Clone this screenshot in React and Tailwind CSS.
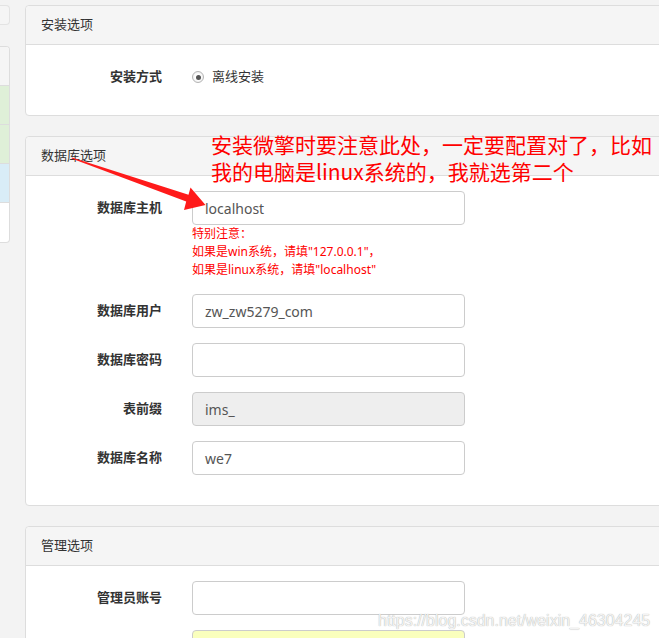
import React from "react";

function Panel({ title, children, bodyClass }) {
  return (
    <div className="rounded-[4px] border border-[#dddddd] bg-white">
      <div className="flex h-[39px] items-center rounded-t-[4px] border-b border-[#dddddd] bg-[#f5f5f5] px-[15px] text-[13px] text-[#333]">
        {title}
      </div>
      <div className={bodyClass}>{children}</div>
    </div>
  );
}

function Row({ label, value, gray, yellow, children }) {
  return (
    <div className="flex items-start">
      <div className="flex h-[34px] w-[136px] shrink-0 items-center justify-end text-[13px] font-bold text-[#333]">
        {label}
      </div>
      <div className="ml-[30px] w-[273px]">
        <div
          className={
            "flex h-[34px] items-center rounded-[4px] border border-[#cccccc] px-[12px] text-[14px] text-[#555] font-['Noto_Sans','Noto_Sans_CJK_SC',sans-serif] " +
            (gray ? "bg-[#eeeeee]" : yellow ? "bg-[#faffbd]" : "bg-white")
          }
        >
          {value}
        </div>
        {children}
      </div>
    </div>
  );
}

export default function App() {
  return (
    <div className="relative h-[638px] w-[659px] overflow-hidden bg-[#f3f3f3] font-['Noto_Sans','Noto_Sans_CJK_SC',sans-serif] text-[13px] text-[#333]">
      <div className="flex">
        <aside className="flex w-[10px] shrink-0 flex-col gap-[21px] pt-[5px]">
          <div className="h-[20px] rounded-r-[4px] border border-l-0 border-[#e3e3e3] bg-[#f5f5f5]" />
          <div className="h-[197px] overflow-hidden rounded-r-[4px] border border-l-0 border-[#dddddd] bg-white">
            <div className="h-[39px] border-b border-[#dddddd] bg-[#f5f5f5]" />
            <div className="h-[39px] border-b border-[#dddddd] bg-[#dff0d8]" />
            <div className="h-[39px] border-b border-[#dddddd] bg-[#dff0d8]" />
            <div className="h-[39px] border-b border-[#dddddd] bg-[#d9edf7]" />
          </div>
        </aside>

        <main className="ml-[15px] flex w-[700px] shrink-0 flex-col gap-[20px] pt-[5px]">
          <Panel title="安装选项" bodyClass="pt-[15px] pb-[21px]">
            <div className="flex h-[34px] items-center">
              <div className="w-[136px] shrink-0 text-right text-[13px] font-bold text-[#333]">
                安装方式
              </div>
              <div className="ml-[30px] flex items-center">
                <span className="flex h-[12px] w-[12px] items-center justify-center rounded-full border border-[#b5b5b5] bg-[radial-gradient(circle,#ffffff_40%,#e2e2e2)]">
                  <span className="h-[5px] w-[5px] rounded-full bg-[#555]" />
                </span>
                <span className="ml-[8px] text-[13px] text-[#333]">离线安装</span>
              </div>
            </div>
          </Panel>

          <Panel title="数据库选项" bodyClass="flex flex-col gap-[15px] pt-[15px] pb-[30px]">
            <Row label="数据库主机" value="localhost">
              <div className="text-[12px] leading-[18px] text-[#ff0000]">
                <div>特别注意：</div>
                <div>如果是win系统，请填"127.0.0.1"，</div>
                <div>如果是linux系统，请填"localhost"</div>
              </div>
            </Row>
            <Row label="数据库用户" value="zw_zw5279_com" />
            <Row label="数据库密码" value="" />
            <Row label="表前缀" value="ims_" gray />
            <Row label="数据库名称" value="we7" />
          </Panel>

          <Panel title="管理选项" bodyClass="flex flex-col gap-[15px] pt-[15px] pb-[30px]">
            <Row label="管理员账号" value="" />
            <Row label="" value="" yellow />
          </Panel>
        </main>
      </div>

      <div className="pointer-events-none absolute left-[211px] top-[131px] text-[21px] leading-[27px] text-[#ff0000] font-['Noto_Sans_CJK_SC','Noto_Sans',sans-serif]">
        <div>安装微擎时要注意此处，一定要配置对了，比如</div>
        <div>我的电脑是linux系统的，我就选第二个</div>
      </div>

      <svg
        className="pointer-events-none absolute left-0 top-0"
        width="659"
        height="638"
        viewBox="0 0 659 638"
      >
        <polygon
          points="72,157.4 188.5,194.8 190.5,187.5 205.5,205 184,210 186.2,201.5 71.6,158.6"
          fill="#ff1a1a"
        />
      </svg>

      <div className="pointer-events-none absolute left-[378px] top-[609px] text-[16px] text-[#f4f4f4] [text-shadow:0_0_1px_#9a9a9a] font-['Liberation_Sans',Arial,sans-serif]">
        https://blog.csdn.net/weixin_46304245
      </div>
    </div>
  );
}
